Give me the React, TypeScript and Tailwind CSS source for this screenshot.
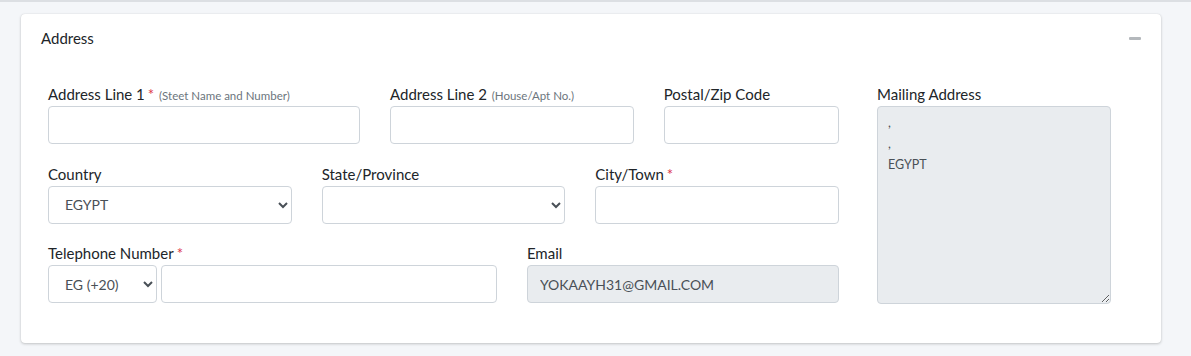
import React from "react";

const font = { fontFamily: "Lato, 'Noto Sans', sans-serif" };

function Label({ children }: { children: React.ReactNode }) {
  return (
    <div className="h-[24px] leading-[24px] text-[15px] text-[#212529] whitespace-nowrap">
      {children}
    </div>
  );
}

function Req() {
  return <span className="text-[#dc3545] ml-[3px]">*</span>;
}

function Small({ children }: { children: React.ReactNode }) {
  return <span className="text-[11.5px] text-[#6c757d] ml-[1px]">{children}</span>;
}

const inputCls =
  "block w-full h-[38px] border border-[#ced4da] rounded-[4px] bg-white px-[12px] text-[14px] text-[#495057] outline-none";

export default function App() {
  return (
    <div
      className="min-h-[356px] bg-[#f4f6f9] border-t-[2px] border-[#dcdfe3] pt-[12px] pl-[21px]"
      style={font}
    >
      <div className="w-[1140px] bg-white rounded-[4px] shadow-[0_0_1px_rgba(0,0,0,0.125),0_1px_3px_rgba(0,0,0,0.2)]">
        <div className="h-[48px] flex items-center justify-between px-[20px]">
          <div className="text-[15px] text-[#212529]">Address</div>
          <button className="w-[13px] h-[13px] flex items-center justify-center">
            <span className="block w-[12px] h-[3px] bg-[#b4b8bc] rounded-[1px]" />
          </button>
        </div>
        <div className="flex pt-[20px] pb-[39px] pl-[27px] gap-[38px]">
          <div className="w-[791px] grid grid-cols-12 gap-x-[30px]">
            <div className="col-span-5 mb-[17px]">
              <Label>
                Address Line 1<Req /> <Small>(Steet Name and Number)</Small>
              </Label>
              <input className={inputCls} />
            </div>
            <div className="col-span-4 mb-[17px]">
              <Label>
                Address Line 2 <Small>(House/Apt No.)</Small>
              </Label>
              <input className={inputCls} />
            </div>
            <div className="col-span-3 mb-[17px]">
              <Label>Postal/Zip Code</Label>
              <input className={inputCls} />
            </div>

            <div className="col-span-4 mb-[17px]">
              <Label>Country</Label>
              <select className={inputCls} defaultValue="EGYPT">
                <option>EGYPT</option>
              </select>
            </div>
            <div className="col-span-4 mb-[17px]">
              <Label>State/Province</Label>
              <select className={inputCls} defaultValue="">
                <option value=""></option>
              </select>
            </div>
            <div className="col-span-4 mb-[17px]">
              <Label>
                City/Town<Req />
              </Label>
              <input className={inputCls} />
            </div>

            <div className="col-span-7">
              <Label>
                Telephone Number<Req />
              </Label>
              <div className="flex gap-[4px]">
                <select className={inputCls + " !w-[109px] shrink-0"} defaultValue="EG">
                  <option value="EG">EG (+20)</option>
                </select>
                <input className={inputCls} />
              </div>
            </div>
            <div className="col-span-5">
              <Label>Email</Label>
              <input
                className={inputCls + " !bg-[#e9ecef]"}
                readOnly
                value="YOKAAYH31@GMAIL.COM"
              />
            </div>
          </div>
          <div className="w-[234px]">
            <Label>Mailing Address</Label>
            <textarea
              readOnly
              className="block w-full h-[198px] border border-[#ced4da] rounded-[4px] bg-[#e9ecef] px-[10px] py-[5px] text-[12.5px] leading-[21px] text-[#495057] outline-none"
              value={",\n,\nEGYPT"}
            />
          </div>
        </div>
      </div>
    </div>
  );
}
